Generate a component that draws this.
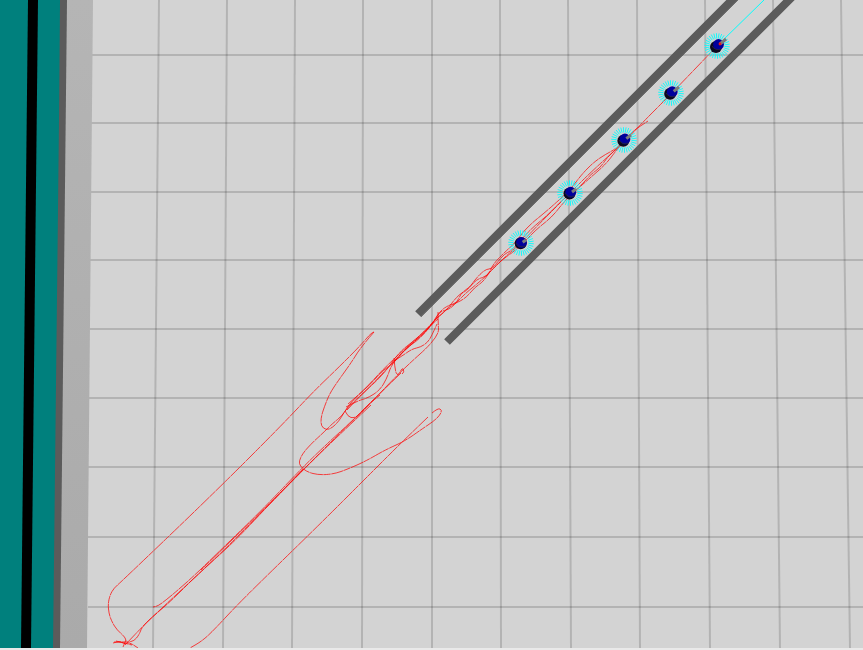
const verticals: [number, number][] = [
  [159, 153], [227, 223], [295, 292], [363, 362], [432, 432], [500, 501],
  [568, 571], [637, 640], [705, 710], [773, 780], [841, 850],
];
const horizontals = [55, 123, 192, 260, 329, 398, 467, 537, 607];

const robots = [
  { x: 717, y: 46, dx: 6, dy: -6, lead: true },
  { x: 671, y: 93, dx: 5, dy: -5, lead: false },
  { x: 624, y: 140, dx: 4, dy: -4, lead: false },
  { x: 570, y: 193, dx: 3, dy: -3, lead: false },
  { x: 521, y: 243, dx: 2, dy: -2, lead: false },
];

const rays = Array.from({ length: 30 }, (_, i) => (i * Math.PI) / 15 + 0.06);

// Odometry trails left behind by the robots, as "x y" points.
const trails = [
  "374 332,372 332,360 346,338 368,314 391,280 427,214 493,121 582,114 588,110 595,108 604,109 614,112 622,117 630,125 637,126 641",
  "374 332,361 347,351 363,338 381,330 393,325 405,321 417,321 426,326 430,332 428,339 421,345 411",
  "432 413,438 408,442 410,440 415,434 421,422 429,405 441,385 450,366 461,348 469,334 474,319 475,307 472,300 466,299 461,303 453,312 443,323 433,332 424,343 415,350 403,366 388,388 364,438 319",
  "428 417,403 441,366 478,324 520,284 559,239 603,213 631,202 641,190 648",
  "438 312,438 321,439 337,401 371,368 406,335 438,307 466,260 514,215 559,178 593,145 624,125 645",
  "401 373,368 405,351 422,329 442,303 467,262 510,231 540,196 574,178 590,166 600,158 606,153 607",
  "303 469,264 510,234 542,199 573,170 602,151 618,142 627,139 635,134 641,128 642,114 642",
  "371 405,338 436,305 468,264 509,233 539,201 570",
  "113 643,120 641,124 644,129 642,138 648",
  "116 641,124 643,132 645",
  "126 640,123 647",
  "345 411,350 405,370 387,393 362,400 355,415 341,430 327,438 314,442 311,450 309,459 300,467 292,483 279,493 269,505 257,521 243,543 220,570 193,591 172,623 143,646 119,671 94,717 46",
  "345 411,348 417,354 418,359 415,369 404,380 395",
  "346 407,357 401,368 398,380 390,387 378,391 366,399 356,411 344,424 334,434 322,440 311,449 305,457 303,461 293,470 287,477 279,488 276,493 264,506 251,515 243,527 227,548 210,570 190,582 174,594 162,606 154,614 150,624 141",
  "347 410,361 395,384 374,399 352,419 337,433 322,451 305,465 299,475 287,483 282,491 270,503 259,516 250,526 240,538 228,552 217,563 203,574 192,590 178,606 164,615 152,625 140,633 131,648 121",
  "348 404,369 386,383 370,394 363,405 349,421 338,436 318,444 313,459 294,467 291,477 277,486 269,492 269,504 254,511 251,520 241,532 228,549 214,563 199,579 188,591 174,600 168,609 155,624 143",
  "394 361,402 356,412 349,421 347,428 342,432 335,437 324",
  "394 358,395 371,398 376,401 370,403 368,404 372,402 374",
];

// Rounds a point list by running quadratic curves through segment midpoints.
function smooth(list: string) {
  const p = list.split(",").map((s) => s.split(" ").map(Number));
  let d = `M${p[0][0]} ${p[0][1]}`;
  for (let i = 1; i < p.length - 1; i++) {
    d += `Q${p[i][0]} ${p[i][1]} ${(p[i][0] + p[i + 1][0]) / 2} ${(p[i][1] + p[i + 1][1]) / 2}`;
  }
  const last = p[p.length - 1];
  return `${d}L${last[0]} ${last[1]}`;
}

function Robot({ x, y, dx, dy, lead }: (typeof robots)[number]) {
  return (
    <g>
      <g stroke="#00ffff" strokeWidth=".9">
        {rays.map((a) => (
          <line key={a} x1={x + Math.cos(a) * 7.5} y1={y + Math.sin(a) * 7.5} x2={x + Math.cos(a) * 12.8} y2={y + Math.sin(a) * 12.8} />
        ))}
      </g>
      <circle cx={x - dx / 6} cy={y - dy / 6} r="6" fill="#0a0a1e" />
      <circle cx={x + dx / 4} cy={y + dy / 4} r="5.4" fill="#00009c" />
      <path d={`M${x - 5} ${y}Q${x - 2} ${y + 5} ${x + 4} ${y + 3}`} stroke="#202048" strokeWidth="1" fill="none" />
      <line x1={x + 1 + dx / 3} y1={y - dx / 3} x2={x + 3 + dx} y2={y - 1 + dy} stroke="#7b7b7b" strokeWidth="3" />
      {lead && <circle cx={x + 3} cy={y - 2} r="1.4" fill="#ef1515" />}
    </g>
  );
}

export default function App() {
  return (
    <main className="w-full bg-[#e9e9e9]">
      <svg className="block h-auto w-full" viewBox="0 0 863 650" role="img" aria-label="Robots travelling through a corridor">
        <defs>
          <linearGradient id="ledge" x1="0" y1="0" x2="0" y2="1">
            <stop stopColor="#b5b5b5" />
            <stop offset="1" stopColor="#aaaaaa" />
          </linearGradient>
          <clipPath id="scene"><rect width="863" height="648" /></clipPath>
        </defs>
        <g clipPath="url(#scene)">
          <rect width="863" height="648" fill="#d3d3d3" />
          <g fill="none" stroke="#000" strokeOpacity=".15" strokeWidth="2">
            {verticals.map(([a, b]) => <line key={a} x1={a} y1="0" x2={b} y2="648" />)}
            {horizontals.map((y) => <line key={y} x1="88" y1={y} x2="863" y2={y} />)}
          </g>
          <path d="M0 0H93L87 648H0Z" fill="url(#ledge)" />
          <path d="M0 0H67L60 648H0Z" fill="#5b5b5b" />
          <path d="M0 0H60L59 120L53 648H0Z" fill="#00807d" />
          <path d="M28 0H38L31 648H21Z" fill="#000" />
          <path d="M735 -3L418 314M793 -4L447 342" stroke="#5b5b5b" strokeWidth="8" />
          <path d="M738 0L421 317" stroke="#3c3c3c" strokeWidth=".6" />
          <g fill="none" stroke="#ff0000" strokeOpacity=".72" strokeWidth="1" strokeDasharray="13 .7 7 .5">
            {trails.map((d) => <path key={d} d={smooth(d)} />)}
          </g>
          <line x1="720" y1="43" x2="764" y2="0" stroke="#00ffff" />
          {robots.map((r) => <Robot key={r.x} {...r} />)}
        </g>
      </svg>
    </main>
  );
}
